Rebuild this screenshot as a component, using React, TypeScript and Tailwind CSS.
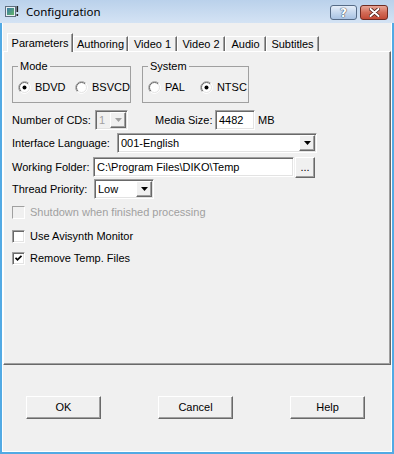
import React from "react";

const raised =
  "bg-[#f0f0f0] border-t border-l border-white border-r border-b border-r-[#696969] border-b-[#696969] shadow-[inset_-1px_-1px_0_#a0a0a0]";
const sunken =
  "border border-t-[#a0a0a0] border-l-[#a0a0a0] border-r-white border-b-white shadow-[inset_1px_1px_0_#696969,inset_-1px_-1px_0_#e3e3e3]";

function Arrow({ color = "#000" }: { color?: string }) {
  return (
    <svg width="7" height="4" viewBox="0 0 7 4">
      <path d="M0 0h7L3.5 4z" fill={color} />
    </svg>
  );
}

function Combo({ value, w, disabled }: { value: string; w: string; disabled?: boolean }) {
  return (
    <div className={`${sunken} ${w} h-[20px] flex items-center p-[1px] ${disabled ? "bg-[#f0f0f0]" : "bg-white"}`}>
      <span className={`flex-1 pl-[2px] ${disabled ? "text-[#a0a0a0]" : ""}`}>{value}</span>
      <div className={`${raised} w-[16px] h-[16px] flex items-center justify-center`}>
        <Arrow color={disabled ? "#a0a0a0" : "#000"} />
      </div>
    </div>
  );
}

function RadioDot({ checked }: { checked?: boolean }) {
  return (
    <svg width="13" height="13" viewBox="0 0 13 13" className="shrink-0">
      <circle cx="6.5" cy="6.5" r="6" fill="#fff" />
      <path d="M2.26 10.74A6 6 0 0 1 10.74 2.26" fill="none" stroke="#a0a0a0" />
      <path d="M10.74 2.26A6 6 0 0 1 2.26 10.74" fill="none" stroke="#fff" />
      <path d="M2.96 10.04A5 5 0 0 1 10.04 2.96" fill="none" stroke="#696969" />
      <path d="M10.04 2.96A5 5 0 0 1 2.96 10.04" fill="none" stroke="#e3e3e3" />
      {checked && <circle cx="6.5" cy="6.5" r="2" fill="#000" />}
    </svg>
  );
}

function Radio({ label, checked, w }: { label: string; checked?: boolean; w?: string }) {
  return (
    <div className={`flex items-center ${w ?? ""}`}>
      <RadioDot checked={checked} />
      <span className="ml-[4px]">{label}</span>
    </div>
  );
}

function Check({ label, checked, disabled, mt }: { label: string; checked?: boolean; disabled?: boolean; mt: string }) {
  return (
    <div className={`flex items-center h-[16px] ${mt}`}>
      <div
        className={`w-[13px] h-[13px] flex items-center justify-center ${
          disabled ? "border border-[#a0a0a0] border-r-white border-b-white bg-[#f0f0f0]" : `${sunken} bg-white`
        }`}
      >
        {checked && (
          <svg width="7" height="7" viewBox="0 0 7 7">
            <path d="M0.5 2.8L2.5 4.8L6.5 0.8" fill="none" stroke="#000" strokeWidth="1.8" />
          </svg>
        )}
      </div>
      <span className={`ml-[5px] ${disabled ? "text-[#a0a0a0]" : ""}`}>{label}</span>
    </div>
  );
}

function Group({ title, w, ml, children }: { title: string; w: string; ml?: string; children: React.ReactNode }) {
  return (
    <fieldset className={`${w} ${ml ?? ""} h-[43px] border border-[#a0a0a0]`}>
      <legend className="ml-[5px] px-[2px] leading-[13px]">{title}</legend>
      <div className="h-[29px] flex items-center pl-[5px]">{children}</div>
    </fieldset>
  );
}

function Tab({ label, w, active }: { label: string; w: string; active?: boolean }) {
  return (
    <div
      className={`${w} flex items-center justify-center border-l border-t border-white border-r border-r-[#696969] shadow-[inset_-1px_0_0_#a0a0a0] ${
        active ? "h-[19px] -mb-[1px] relative z-10 bg-[#f0f0f0]" : "h-[15px] pt-[1px]"
      }`}
    >
      {label}
    </div>
  );
}

function WinIcon() {
  return (
    <svg width="14" height="13" viewBox="0 0 14 13">
      <defs>
        <linearGradient id="wi" x1="0" y1="0" x2="1" y2="1">
          <stop offset="0" stopColor="#3a7aa6" />
          <stop offset="1" stopColor="#62b566" />
        </linearGradient>
      </defs>
      <rect x="0.5" y="1.5" width="10" height="10" fill="#e9eef3" stroke="#5e6f80" />
      <rect x="2" y="3" width="7" height="7" fill="url(#wi)" />
      <rect x="11.5" y="1" width="1.6" height="6" fill="#222" />
      <rect x="11.5" y="9" width="1.6" height="2" fill="#222" />
    </svg>
  );
}

function TitleBar() {
  return (
    <div className="h-[23px] flex items-center pl-[5px] pr-[6px] bg-linear-to-b from-[#bad1eb] to-[#d4e3f4]">
      <WinIcon />
      <span className="ml-[7px] font-['Noto_Sans',sans-serif] text-[11.5px] text-black">Configuration</span>
      <div className="ml-auto flex gap-[3px] mt-[2px]">
        <div className="w-[27px] h-[15px] rounded-[3px] border border-[#566b86] bg-linear-to-b from-[#e6eef8] via-[#c6d8ee] to-[#a8c2e2] flex items-center justify-center">
          <span className="text-white font-bold text-[12px] leading-none font-['DejaVu_Sans',sans-serif] [text-shadow:0_0_1px_#1e2c40,0_0_1px_#1e2c40]">
            ?
          </span>
        </div>
        <div className="w-[28px] h-[15px] rounded-[3px] border border-[#6e2b22] bg-linear-to-b from-[#e8a596] via-[#d26c58] to-[#c24a36] flex items-center justify-center">
          <svg width="11" height="9" viewBox="0 0 11 9">
            <path d="M1.5 1L9.5 8M9.5 1L1.5 8" stroke="#4a1b14" strokeWidth="3.6" strokeLinecap="round" />
            <path d="M1.5 1L9.5 8M9.5 1L1.5 8" stroke="#fff" strokeWidth="2" strokeLinecap="round" />
          </svg>
        </div>
      </div>
    </div>
  );
}

function Button({ label }: { label: string }) {
  return <div className={`${raised} w-[75px] h-[23px] flex items-center justify-center`}>{label}</div>;
}

export default function App() {
  return (
    <div className="w-[394px] h-[454px] flex flex-col font-['Liberation_Sans',Arial,sans-serif] text-[11px] text-black bg-[#f0f0f0]">
      <TitleBar />
      <div className="flex-1 flex border-x-2 border-b-2 border-[#52aae4]">
        <div className="flex-1 flex flex-col border-x border-b border-white bg-[#f0f0f0]">
          <div className="h-[28px] flex items-end pl-[4px]">
            <Tab label="Parameters" w="w-[66px]" active />
            <Tab label="Authoring" w="w-[55px]" />
            <Tab label="Video 1" w="w-[49px]" />
            <Tab label="Video 2" w="w-[48px]" />
            <Tab label="Audio" w="w-[41px]" />
            <Tab label="Subtitles" w="w-[53px]" />
          </div>

          <div className="h-[314px] pl-[8px] pt-[8px] border-l border-t border-white border-r border-b border-r-[#696969] border-b-[#696969] shadow-[inset_-1px_-1px_0_#a0a0a0]">
            <div className="flex">
              <Group title="Mode" w="w-[118px]">
                <Radio label="BDVD" checked w="w-[57px]" />
                <Radio label="BSVCD" />
              </Group>
              <Group title="System" w="w-[107px]" ml="ml-[11px]">
                <Radio label="PAL" w="w-[52px]" />
                <Radio label="NTSC" checked />
              </Group>
            </div>

            <div className="mt-[7px] h-[20px] flex items-center">
              <span className="w-[83px]">Number of CDs:</span>
              <Combo value="1" w="w-[33px]" disabled />
              <span className="ml-[27px] w-[60px]">Media Size:</span>
              <div className={`${sunken} w-[40px] h-[20px] bg-white flex items-center px-[3px]`}>4482</div>
              <span className="ml-[3px]">MB</span>
            </div>

            <div className="mt-[3px] h-[20px] flex items-center">
              <span className="w-[105px]">Interface Language:</span>
              <Combo value="001-English" w="w-[200px]" />
            </div>

            <div className="mt-[4px] h-[20px] flex items-center">
              <span className="w-[81px]">Working Folder:</span>
              <div className={`${sunken} w-[201px] h-[20px] bg-white flex items-center px-[3px]`}>
                C:\Program Files\DIKO\Temp
              </div>
              <div className={`${raised} ml-[1px] w-[20px] h-[21px] flex items-end justify-center pb-[4px] leading-none`}>
                ...
              </div>
            </div>

            <div className="mt-[2px] h-[20px] flex items-center">
              <span className="w-[82px]">Thread Priority:</span>
              <Combo value="Low" w="w-[60px]" />
            </div>

            <Check label="Shutdown when finished processing" disabled mt="mt-[5px]" />
            <Check label="Use Avisynth Monitor" mt="mt-[8px]" />
            <Check label="Remove Temp. Files" checked mt="mt-[6px]" />
          </div>

          <div className="mt-[31px] flex pl-[23px] gap-[57px]">
            <Button label="OK" />
            <Button label="Cancel" />
            <Button label="Help" />
          </div>
        </div>
      </div>
    </div>
  );
}
